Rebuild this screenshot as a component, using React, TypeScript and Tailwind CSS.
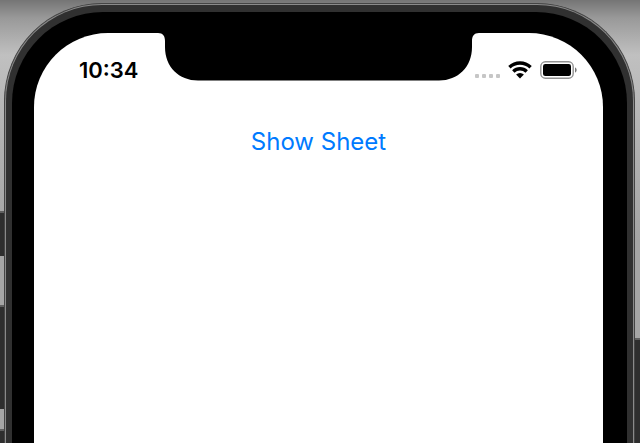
function Cellular() {
  return (
    <div className="mb-px flex shrink-0 gap-[3px]" role="img" aria-label="No signal">
      <span className="size-1 rounded-[1px] bg-[#c6c6c6]" />
      <span className="size-1 rounded-[1px] bg-[#c6c6c6]" />
      <span className="size-1 rounded-[1px] bg-[#c6c6c6]" />
      <span className="size-1 rounded-[1px] bg-[#c6c6c6]" />
    </div>
  );
}

function Wifi() {
  return (
    <svg className="h-[18px] w-6 shrink-0" viewBox="0 0 24 18" role="img" aria-label="Wi-Fi">
      <g fill="none" stroke="#000" strokeWidth="3.4">
        <path d="M1.4 6.2a15.4 15.4 0 0 1 21.2 0" />
        <path d="M5.3 10.5a9.7 9.7 0 0 1 13.4 0" />
      </g>
      <path d="M8.1 13.6a5.6 5.6 0 0 1 7.8 0L12 17.600z" />
    </svg>
  );
}

function Battery() {
  return (
    <svg className="h-[18px] w-[37px] shrink-0" viewBox="0 0 37 18" role="img" aria-label="Battery full">
      <rect x=".8" y=".8" width="32.4" height="16.4" rx="4.6" fill="none" stroke="#929292" strokeWidth="1.4" />
      <rect x="3" y="3" width="28" height="12" rx="2.3" />
      <path d="M35 6.3q1.700 1 1.700 2.700T35 11.700z" fill="#777" />
    </svg>
  );
}

function Notch() {
  return (
    <svg className="h-[48px] w-[321px]" viewBox="0 0 321 48" aria-hidden="true">
      <path d="M0 0H321C316 0 314 3 314 8V14C314 34 300 47.500 281 47.500H40C21 47.500 7 34 7 14V8C7 3 5 0 0 0Z" />
    </svg>
  );
}

export default function App() {
  return (
    <div className="flex min-h-screen bg-[#adadad] bg-[linear-gradient(to_bottom,#757575_0px,#999999_18px,#c0c0c0_55px,#b0b0b0_150px,#a5a5a5_240px)] font-[Inter,'Liberation_Sans',sans-serif]">
      <div className="flex w-1 flex-col pt-[211px]">
        <div className="h-[45px] border-t-2 border-[#606060] bg-[#2e2e2e]" />
        <div className="mt-[49px] h-[104px] border-t-2 border-[#606060] bg-[#2e2e2e]" />
        <div className="mt-5 flex-1 border-t-2 border-[#606060] bg-[#2e2e2e]" />
      </div>
      <div className="mt-[3px] flex flex-1 flex-col rounded-t-[98px] border border-b-0 border-[#444] bg-[#444]">
        <div className="flex flex-1 flex-col rounded-t-[97px] border border-b-0 border-[#8a8a8a] bg-[#303030] px-[6px] pt-[7px]">
          <div className="flex flex-1 flex-col rounded-t-[91px] bg-black pt-[21px] pr-6 pl-[22px]">
            <main className="flex flex-1 flex-col rounded-t-[74px] bg-white">
              <header className="grid grid-cols-[minmax(0,1fr)_321px_minmax(0,1fr)] grid-rows-[48px]">
                <time className="pt-[21px] pl-[45px] text-[22px] leading-8 font-semibold">10:34</time>
                <Notch />
                <div className="flex items-end justify-end gap-2 pr-[26px] pb-[2px]">
                  <Cellular />
                  <Wifi />
                  <Battery />
                </div>
              </header>
              <button type="button" className="mt-[45px] self-center text-2xl text-[#007aff]">Show Sheet</button>
            </main>
          </div>
        </div>
      </div>
      <div className="flex w-[5px] flex-col pt-[338px]">
        <div className="flex-1 border-t-2 border-[#606060] bg-[#2e2e2e]" />
      </div>
    </div>
  );
}
